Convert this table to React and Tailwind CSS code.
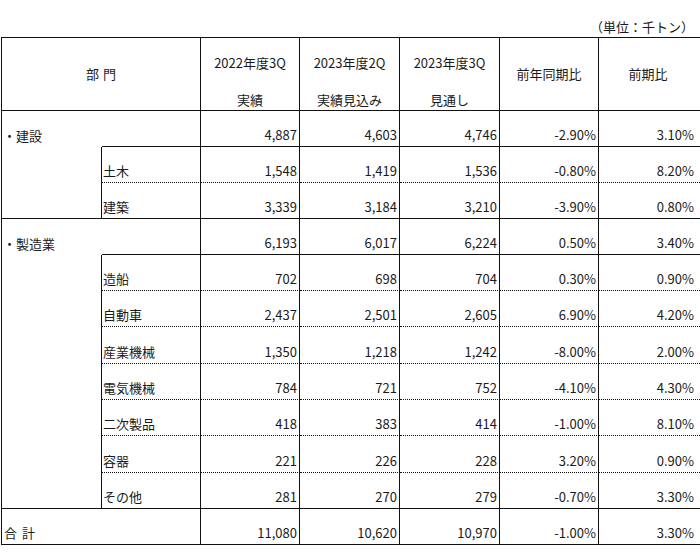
import React from 'react';

const groups = [
  {
    label: '・建設',
    values: ['4,887', '4,603', '4,746', '-2.90%', '3.10%'],
    h: 'h-[36px]',
    items: [
      { label: '土木', values: ['1,548', '1,419', '1,536', '-0.80%', '8.20%'], h: 'h-[36px]' },
      { label: '建築', values: ['3,339', '3,184', '3,210', '-3.90%', '0.80%'], h: 'h-[36px]' },
    ],
  },
  {
    label: '・製造業',
    values: ['6,193', '6,017', '6,224', '0.50%', '3.40%'],
    h: 'h-[36px]',
    items: [
      { label: '造船', values: ['702', '698', '704', '0.30%', '0.90%'], h: 'h-[36px]' },
      { label: '自動車', values: ['2,437', '2,501', '2,605', '6.90%', '4.20%'], h: 'h-[36px]' },
      { label: '産業機械', values: ['1,350', '1,218', '1,242', '-8.00%', '2.00%'], h: 'h-[37px]' },
      { label: '電気機械', values: ['784', '721', '752', '-4.10%', '4.30%'], h: 'h-[36px]' },
      { label: '二次製品', values: ['418', '383', '414', '-1.00%', '8.10%'], h: 'h-[36px]' },
      { label: '容器', values: ['221', '226', '228', '3.20%', '0.90%'], h: 'h-[37px]' },
      { label: 'その他', values: ['281', '270', '279', '-0.70%', '3.30%'], h: 'h-[36px]' },
    ],
  },
];

const valueCols = [
  'w-[99px] pr-[2px]',
  'w-[100px] pr-[2px]',
  'w-[100px] pr-[2px]',
  'w-[99px] pr-[2px]',
  'w-[103px] pr-[7px]',
];

function Values({ values, dotted }) {
  return values.map((v, i) => (
    <div
      key={i}
      className={`${valueCols[i]} shrink-0 flex items-end justify-end pb-[2px] border-r border-b border-[#111] ${
        dotted ? '[border-bottom-style:dotted]' : ''
      }`}
    >
      {v}
    </div>
  ));
}

export default function App() {
  return (
    <div
      className="w-[700px] h-[554px] overflow-hidden bg-white text-[13px] leading-[18px] text-[#1a1a1a]"
      style={{ fontFamily: '"Noto Sans CJK JP", "Noto Sans", sans-serif' }}
    >
      <div className="h-[37px] flex items-end justify-end pr-[6px] pb-[1px]">（単位：千トン）</div>

      <div className="ml-[1px] w-[702px] border-l border-t border-[#111]">
        {/* header */}
        <div className="flex h-[73px] border-b border-[#111]">
          <div className="w-[199px] shrink-0 flex items-center justify-center gap-[4px] border-r border-[#111]">
            <span>部</span>
            <span>門</span>
          </div>
          {[
            ['2022年度3Q', '実績'],
            ['2023年度2Q', '実績見込み'],
            ['2023年度3Q', '見通し'],
          ].map(([a, b], i) => (
            <div
              key={a}
              className={`${i === 0 ? 'w-[99px]' : 'w-[100px]'} shrink-0 flex flex-col items-center justify-end gap-[17px] leading-[20px] border-r border-[#111]`}
            >
              <div>{a}</div>
              <div>{b}</div>
            </div>
          ))}
          <div className="w-[99px] shrink-0 flex items-center justify-center border-r border-[#111]">前年同期比</div>
          <div className="w-[103px] shrink-0 flex items-center justify-center pr-[4px] border-r border-[#111]">前期比</div>
        </div>

        {groups.map((g) => (
          <div key={g.label}>
            <div className={`flex ${g.h}`}>
              <div className="w-[100px] shrink-0 flex items-end pl-[1px] pb-[2px] whitespace-nowrap">{g.label}</div>
              <div className="w-[99px] shrink-0 border-r border-b border-[#111]" />
              <Values values={g.values} />
            </div>
            {g.items.map((it, idx) => {
              const last = idx === g.items.length - 1;
              return (
                <div key={it.label} className={`flex ${it.h}`}>
                  <div className={`w-[100px] shrink-0 border-r border-[#111] ${last ? 'border-b' : ''}`} />
                  <div
                    className={`w-[99px] shrink-0 flex items-end pl-[1px] pb-[2px] border-r border-b border-[#111] ${
                      last ? '' : '[border-bottom-style:dotted]'
                    }`}
                  >
                    {it.label}
                  </div>
                  <Values values={it.values} dotted={!last} />
                </div>
              );
            })}
          </div>
        ))}

        {/* total */}
        <div className="flex h-[36px]">
          <div className="w-[199px] shrink-0 flex items-end gap-[5px] pl-[2px] pb-[2px] border-r border-b border-[#111]">
            <span>合</span>
            <span>計</span>
          </div>
          <Values values={['11,080', '10,620', '10,970', '-1.00%', '3.30%']} />
        </div>
      </div>
    </div>
  );
}
